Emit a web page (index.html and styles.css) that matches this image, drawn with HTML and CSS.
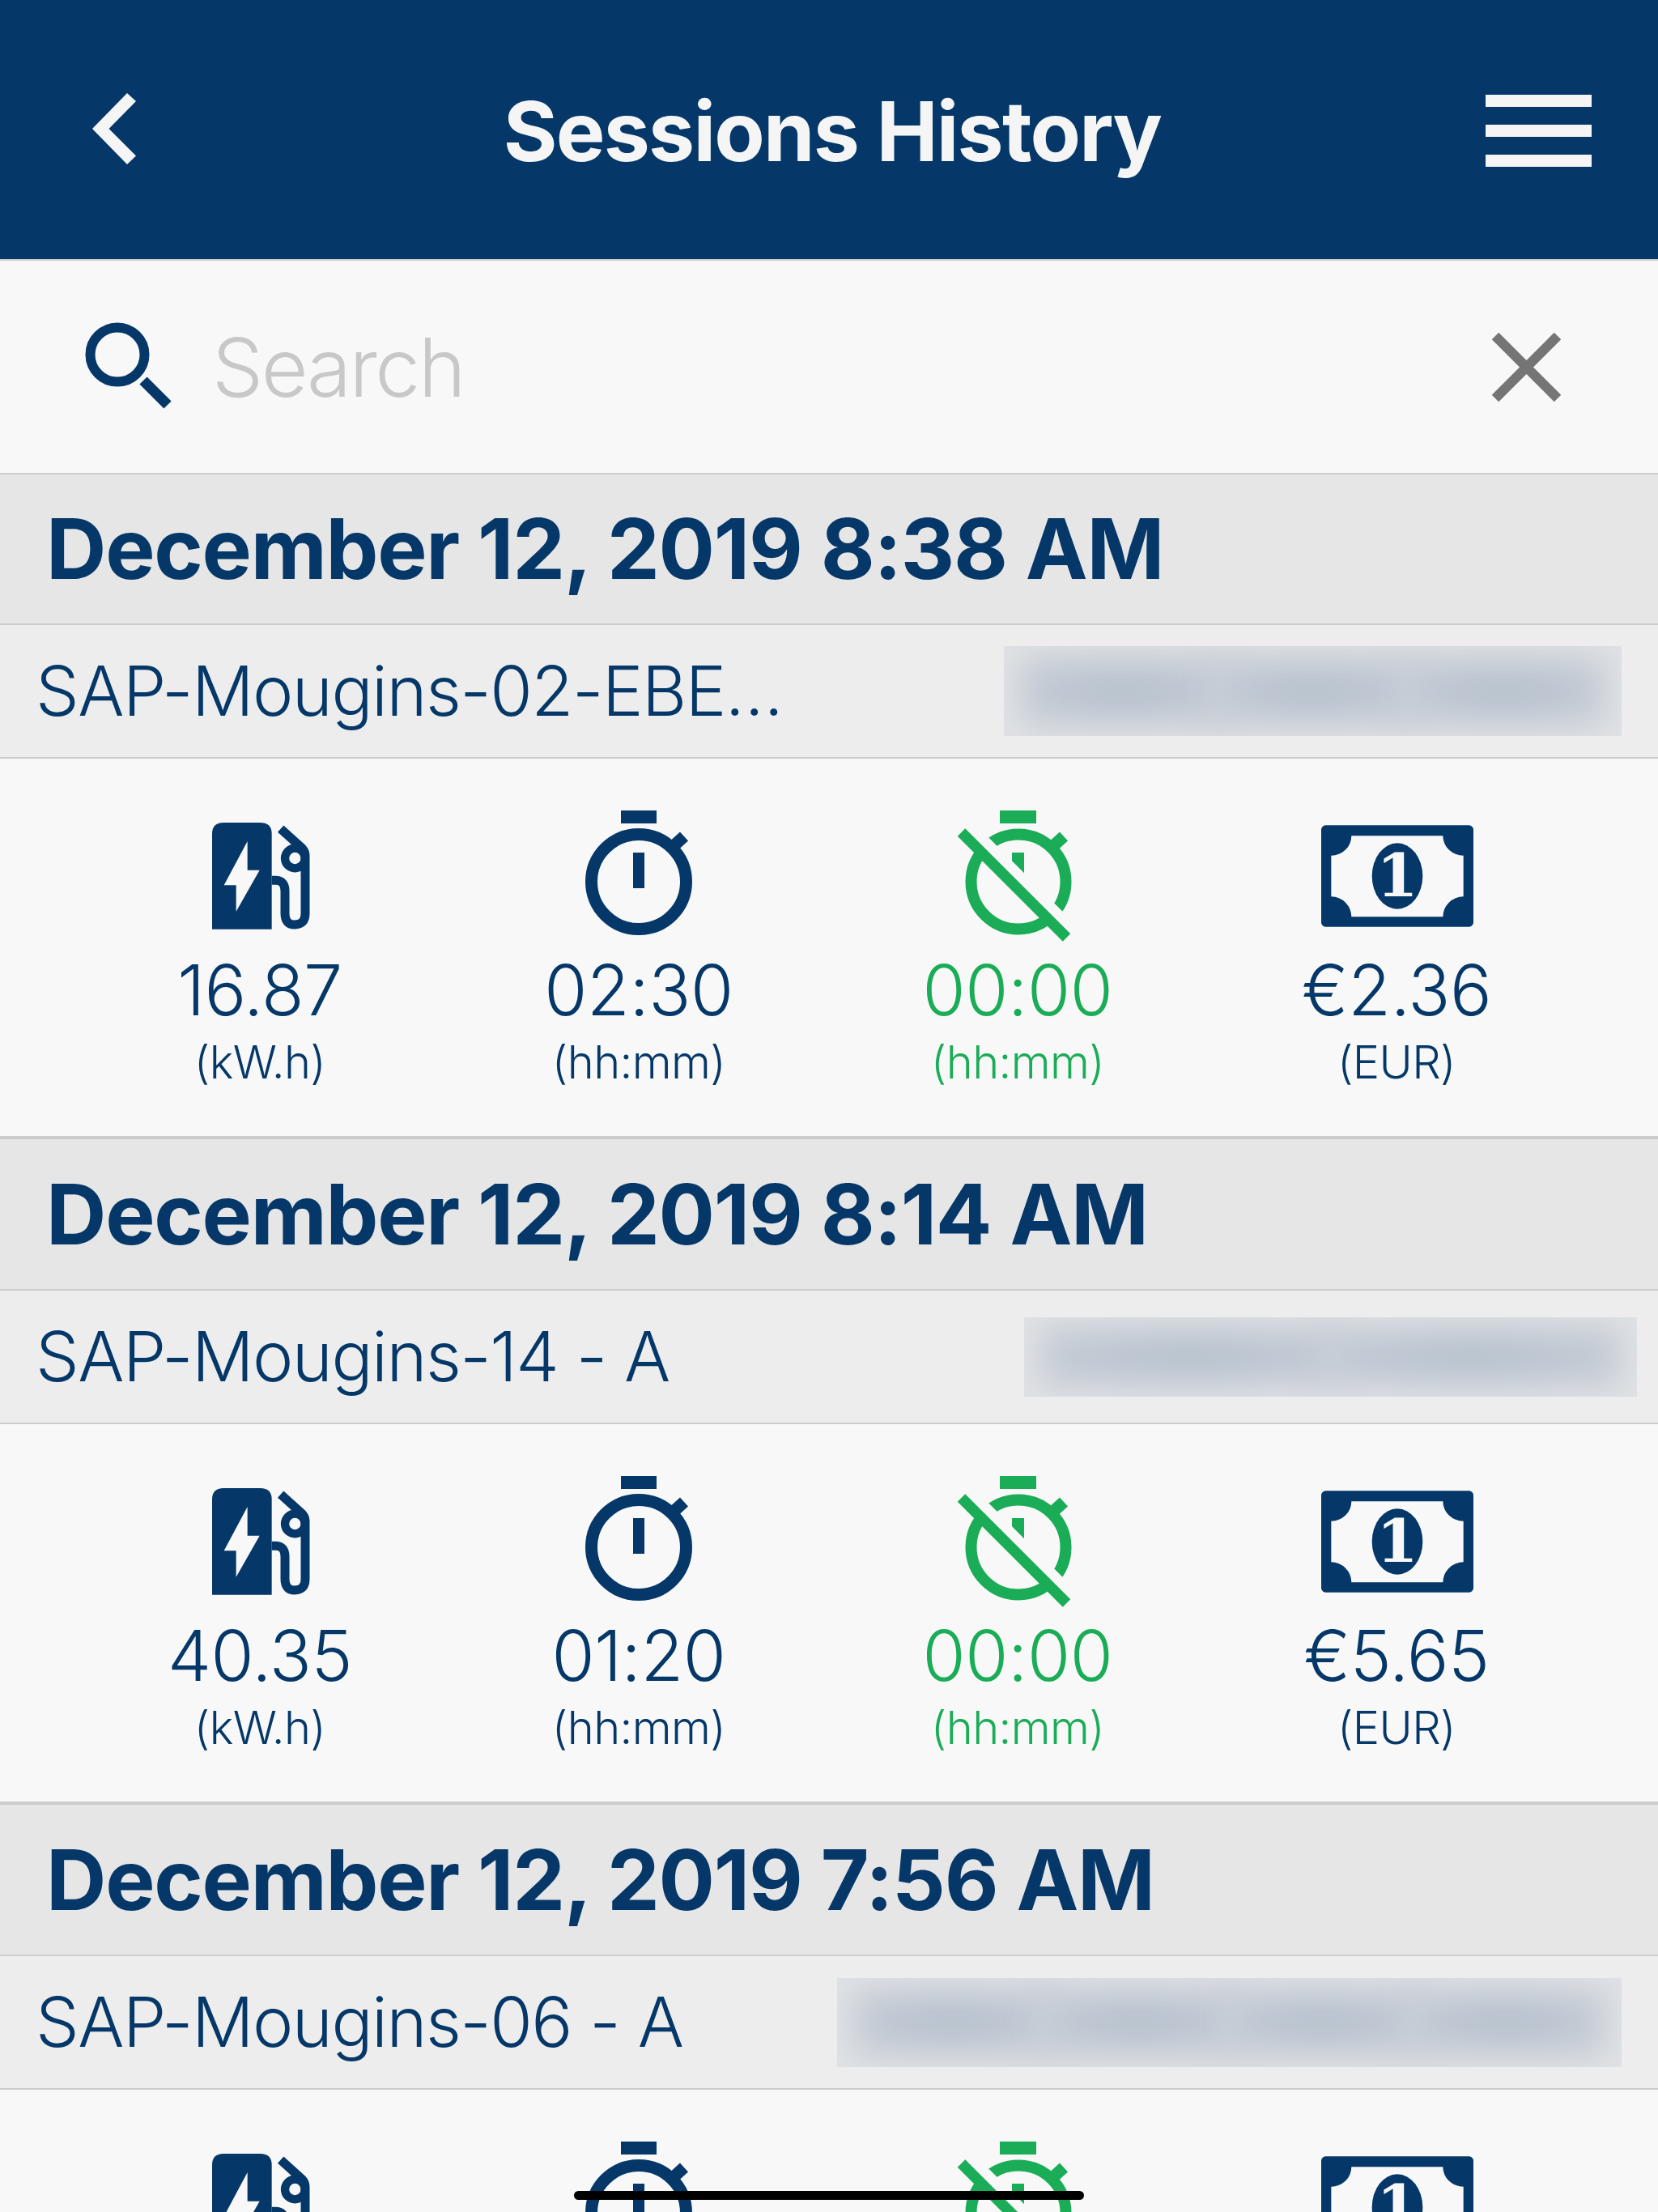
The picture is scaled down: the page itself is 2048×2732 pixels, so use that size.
FILE: index.html
```html
<!DOCTYPE html>
<html>
<head>
  <title>Sessions History</title>
  <link rel="stylesheet" href="styles.css">
</head>
<body>
  <svg class="defs" width="0" height="0">
    <symbol id="pump" viewBox="-12 0 510 510">
      <path fill="currentColor" d="M66 443V90Q66 48 108 48H245Q287 48 287 90V443Z"/>
      <path fill="#f8f8f8" d="M197 117V224H242L155 377V280H110Z"/>
      <path fill="none" stroke="currentColor" stroke-width="33" d="M287 262H300Q336 262 336 300V385Q336 426 372 426Q411 426 411 385V170Q411 155 400 143L320 71"/>
      <circle cx="373" cy="180" r="37" fill="none" stroke="currentColor" stroke-width="31"/>
    </symbol>
    <symbol id="watch" viewBox="0 0 170 170">
      <rect x="63" y="1" width="44" height="16" fill="currentColor"/>
      <circle cx="85" cy="89" r="58.5" fill="none" stroke="currentColor" stroke-width="15"/>
      <rect x="78" y="53" width="14" height="44" fill="currentColor"/>
      <path d="M130 43L141 33" stroke="currentColor" stroke-width="15" fill="none"/>
    </symbol>
    <symbol id="watch-off" viewBox="-1 0 170 170">
      <rect x="62" y="1" width="45" height="16" fill="currentColor"/>
      <circle cx="85" cy="89" r="58.5" fill="none" stroke="currentColor" stroke-width="14"/>
      <rect x="77" y="53" width="15" height="44" fill="currentColor"/>
      <path d="M130 43L141 33" stroke="currentColor" stroke-width="15" fill="none"/>
      <path d="M0 0L170 170" stroke="#f8f8f8" stroke-width="19.5" fill="none"/>
      <path d="M14.5 28L144.5 158" stroke="currentColor" stroke-width="13.5" fill="none"/>
    </symbol>
    <g id="bill">
      <rect x="66" y="58" width="564" height="376" rx="16" fill="currentColor"/>
      <path fill="#f8f8f8" d="M178 97H517A76 73 0 0 0 593 170V322A76 75 0 0 0 517 397H178A75 75 0 0 0 103 322V170A75 73 0 0 0 178 97Z"/>
      <ellipse cx="348" cy="246" rx="94" ry="122" fill="currentColor"/>
    </g>
  </svg>

  <div class="screen">
    <header class="topbar">
      <svg class="back" width="60" height="90" viewBox="0 0 60 90"><path fill="currentColor" d="M43 0L54 10L20.500 44L54 77.500L43 88L0 44Z"/></svg>
      <h1 class="title">Sessions History</h1>
      <div class="burger"><span></span><span></span><span></span></div>
    </header>

    <div class="searchbar">
      <svg class="search-icon" width="110" height="110" viewBox="0 0 110 110">
        <circle cx="40" cy="40" r="33.500" fill="none" stroke="currentColor" stroke-width="12"/>
        <path d="M72 72L102 102" fill="none" stroke="currentColor" stroke-width="13"/>
      </svg>
      <span class="placeholder">Search</span>
      <svg class="clear" width="85" height="85" viewBox="0 0 85 85">
        <path d="M4 4L81 81M81 4L4 81" fill="none" stroke="currentColor" stroke-width="12"/>
      </svg>
    </div>

    <section class="session">
      <div class="date">December 12, 2019 8:38 AM</div>
      <div class="place">
        <span class="place-name">SAP-Mougins-02-EBE…</span>
        <div class="smudge smudge-a"><i></i><i></i><i></i></div>
      </div>
      <div class="stats">
        <div class="stat"><svg class="icon"><use href="#pump"/></svg><div class="val">16.87</div><div class="unit">(kW.h)</div></div>
        <div class="stat"><svg class="icon"><use href="#watch"/></svg><div class="val">02:30</div><div class="unit">(hh:mm)</div></div>
        <div class="stat green"><svg class="icon"><use href="#watch-off"/></svg><div class="val">00:00</div><div class="unit">(hh:mm)</div></div>
        <div class="stat"><svg class="icon icon-wide" viewBox="15 0 660 510"><use href="#bill"/><text class="bill-digit" x="348" y="322" text-anchor="middle">1</text></svg><div class="val">€2.36</div><div class="unit">(EUR)</div></div>
      </div>
    </section>

    <section class="session">
      <div class="date">December 12, 2019 8:14 AM</div>
      <div class="place">
        <span class="place-name">SAP-Mougins-14 - A</span>
        <div class="smudge smudge-b"><i></i><i></i></div>
      </div>
      <div class="stats">
        <div class="stat"><svg class="icon"><use href="#pump"/></svg><div class="val">40.35</div><div class="unit">(kW.h)</div></div>
        <div class="stat"><svg class="icon"><use href="#watch"/></svg><div class="val">01:20</div><div class="unit">(hh:mm)</div></div>
        <div class="stat green"><svg class="icon"><use href="#watch-off"/></svg><div class="val">00:00</div><div class="unit">(hh:mm)</div></div>
        <div class="stat"><svg class="icon icon-wide" viewBox="15 0 660 510"><use href="#bill"/><text class="bill-digit" x="348" y="322" text-anchor="middle">1</text></svg><div class="val">€5.65</div><div class="unit">(EUR)</div></div>
      </div>
    </section>

    <section class="session">
      <div class="date">December 12, 2019 7:56 AM</div>
      <div class="place">
        <span class="place-name">SAP-Mougins-06 - A</span>
        <div class="smudge smudge-c"><i></i><i></i><i></i><i></i></div>
      </div>
      <div class="stats">
        <div class="stat"><svg class="icon"><use href="#pump"/></svg></div>
        <div class="stat"><svg class="icon"><use href="#watch"/></svg></div>
        <div class="stat green"><svg class="icon"><use href="#watch-off"/></svg></div>
        <div class="stat"><svg class="icon icon-wide" viewBox="15 0 660 510"><use href="#bill"/><text class="bill-digit" x="348" y="322" text-anchor="middle">1</text></svg></div>
      </div>
    </section>

    <div class="home-bar"></div>
  </div>
</body>
</html>
```

FILE: styles.css
```css
html, body {
  margin: 0;
  padding: 0;
  background: #f8f8f8;
}
.defs {
  position: absolute;
}
.bill-digit {
  font-family: "DejaVu Serif", serif;
  font-weight: 700;
  font-size: 220px;
  fill: #f8f8f8;
}
.screen {
  position: relative;
  width: 2048px;
  height: 2732px;
  overflow: hidden;
  font-family: Inter, "Liberation Sans", sans-serif;
  color: #053868;
}

.topbar {
  height: 320px;
  background: #053868;
  color: #f5f5f5;
  display: grid;
  grid-template-columns: 1fr auto 1fr;
  align-items: center;
  padding: 0 82px 0 114px;
  border-bottom: 2px solid #cfcfcf;
}
.back {
  margin-top: -1px;
}
.title {
  margin: 0 12px -4px -12px;
  font-size: 102px;
  font-weight: 700;
  letter-spacing: -1.8px;
}
.burger {
  display: flex;
  flex-direction: column;
  gap: 22px;
  width: 131px;
  margin-top: 2px;
  justify-self: end;
}
.burger span {
  display: block;
  height: 15px;
  background: #f5f5f5;
}

.searchbar {
  height: 262px;
  display: flex;
  align-items: center;
  padding: 0 120px 0 105px;
  border-bottom: 2px solid #cccccc;
  background: #f8f8f8;
}
.search-icon {
  color: #053868;
}
.placeholder {
  margin-left: 47px;
  font-size: 100px;
  font-weight: 300;
  letter-spacing: -2.5px;
  color: #c8c8c8;
  flex: 1;
}
.clear {
  color: #757575;
}

.date {
  height: 185px;
  line-height: 185px;
  padding-left: 57px;
  background: #e6e6e6;
  border-bottom: 2px solid #cccccc;
  font-size: 103px;
  font-weight: 700;
  letter-spacing: -1.25px;
}
.session:first-of-type .date {
  height: 184px;
  line-height: 184px;
}
.place {
  height: 163px;
  display: flex;
  align-items: center;
  justify-content: space-between;
  padding-left: 44px;
  background: #ededed;
  border-bottom: 2px solid #cccccc;
}
.place-name {
  font-size: 85px;
  font-weight: 360;
  letter-spacing: -1.5px;
}

.smudge {
  display: flex;
  align-items: center;
  overflow: hidden;
  padding: 0 30px;
  background: #e0e2e5;
  box-sizing: border-box;
}
.smudge i {
  display: block;
  height: 74%;
  flex: 1;
  margin: 0 -8px;
  background: radial-gradient(ellipse closest-side, #b3bfcb, #c3cad4);
  filter: blur(20px);
}
.smudge-a {
  width: 763px;
  height: 111px;
  margin-right: 45px;
}
.smudge-b {
  width: 757px;
  height: 98px;
  margin-right: 26px;
}
.smudge-c {
  width: 969px;
  height: 110px;
  margin-right: 45px;
}

.stats {
  height: 466px;
  display: grid;
  grid-template-columns: repeat(4, 468px);
  padding: 0 87px;
  background: #f8f8f8;
  border-bottom: 4px solid #cccccc;
}
.stat {
  display: flex;
  flex-direction: column;
  align-items: center;
  padding-top: 63px;
}
.green {
  color: #1aac56;
}
.icon {
  display: block;
  width: 170px;
  height: 170px;
}
.icon-wide {
  width: 220px;
}
.val {
  font-size: 86px;
  font-weight: 350;
  letter-spacing: -0.4px;
  line-height: 85px;
  margin-top: 11px;
}
.unit {
  font-size: 56px;
  font-weight: 350;
  letter-spacing: -0.6px;
  line-height: 60px;
  margin-top: 16px;
}

.home-bar {
  position: absolute;
  left: 709px;
  top: 2706px;
  width: 630px;
  height: 11px;
  border-radius: 6px;
  background: #000000;
}
```
